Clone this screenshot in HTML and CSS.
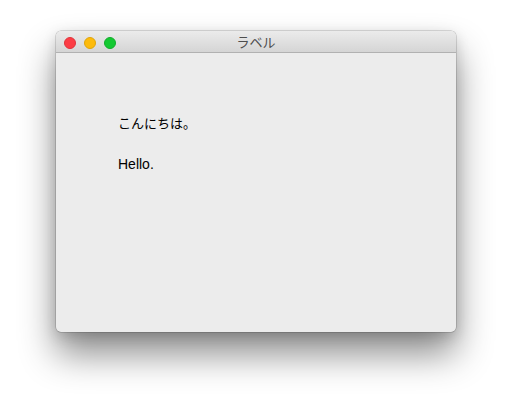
FILE: index.html
```html
<!DOCTYPE html>
<html lang="ja">
<head>
<meta charset="utf-8">
<link rel="stylesheet" href="styles.css">
</head>
<body>
<div class="window">
  <div class="titlebar">
    <div class="lights">
      <span class="light red"></span>
      <span class="light yellow"></span>
      <span class="light green"></span>
    </div>
    <div class="title">ラベル</div>
  </div>
  <div class="content">
    <div class="label jp">こんにちは。</div>
    <div class="label en">Hello.</div>
  </div>
</div>
</body>
</html>
```
FILE: styles.css
```css
html, body {
  margin: 0;
  padding: 0;
  background: #ffffff;
  width: 512px;
  height: 412px;
  overflow: hidden;
}
body {
  padding: 31px 0 0 56px;
  box-sizing: border-box;
  font-family: "Liberation Sans", "Noto Sans CJK JP", sans-serif;
}
.window {
  width: 400px;
  height: 301px;
  border-radius: 5px;
  background: #ececec;
  box-shadow: 0 0 0 0.5px rgba(0,0,0,0.25), 0 22px 36px rgba(0,0,0,0.45), 0 4px 14px rgba(0,0,0,0.15);
  display: flex;
  flex-direction: column;
  overflow: hidden;
}
.titlebar {
  height: 22px;
  flex: none;
  background: linear-gradient(#ebebeb, #d5d5d5);
  border-bottom: 1px solid #b1b1b1;
  box-sizing: border-box;
  position: relative;
  display: flex;
  align-items: center;
  justify-content: center;
}
.lights {
  position: absolute;
  left: 8px;
  top: 6px;
  display: flex;
  gap: 8px;
}
.light {
  width: 12px;
  height: 12px;
  border-radius: 50%;
  box-sizing: border-box;
}
.red { background: #fc3d45; border: 0.5px solid #e0343b; }
.yellow { background: #fdbb0c; border: 0.5px solid #e0a50a; }
.green { background: #14c932; border: 0.5px solid #12ad2b; }
.title {
  font-family: "Noto Sans CJK JP", sans-serif;
  font-size: 13px;
  color: #4d4d4d;
  line-height: 22px;
}
.content {
  flex: 1;
  padding: 60px 0 0 62px;
  display: flex;
  flex-direction: column;
  gap: 21px;
}
.label {
  font-size: 13px;
  color: #000;
  line-height: 20px;
}
.en {
  font-size: 14px;
}
.jp {
  font-family: "Noto Sans CJK JP", sans-serif;
}
```
